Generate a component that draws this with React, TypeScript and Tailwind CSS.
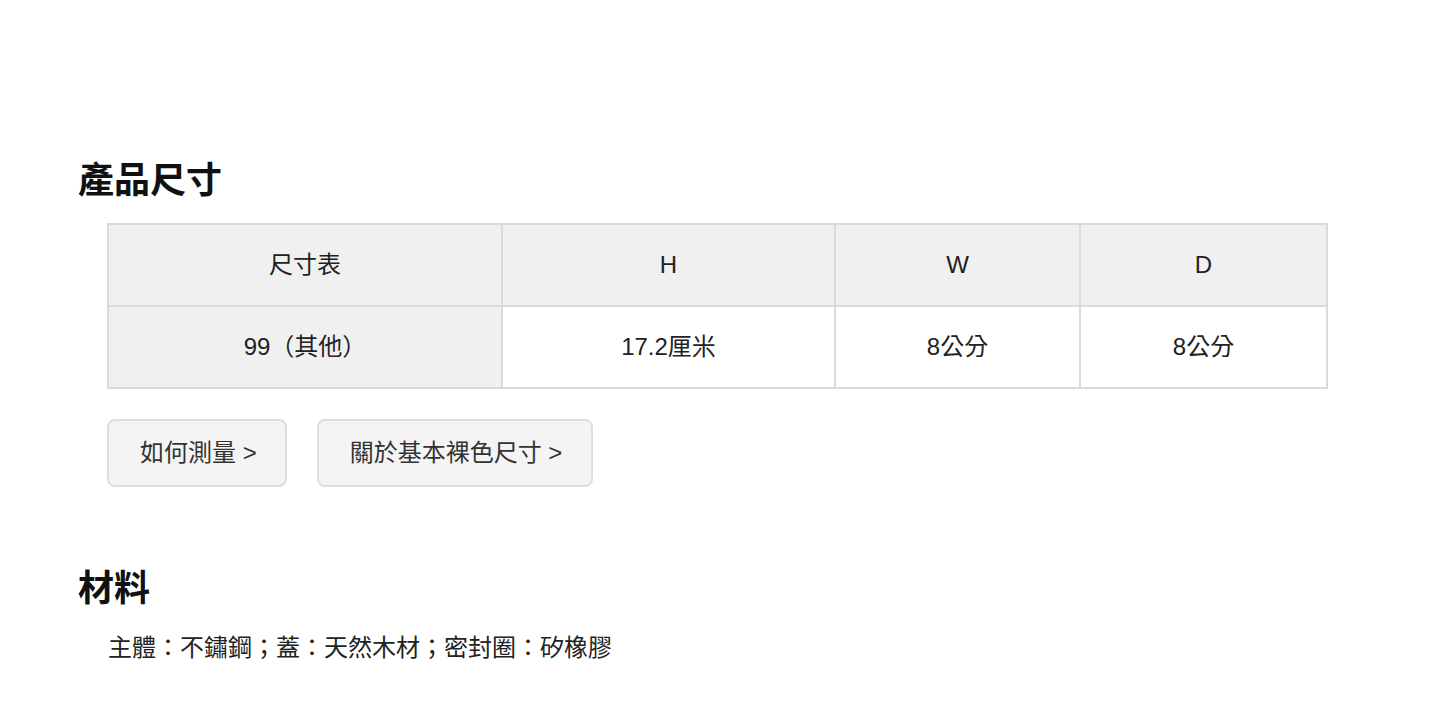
// 產品尺寸 + 材料 區塊

const FONT = '[font-family:"Liberation_Sans","Noto_Sans_CJK_TC",sans-serif]'

const COLS = [
  { label: '尺寸表', w: 'w-[394px]' },
  { label: 'H', w: 'w-[333px]' },
  { label: 'W', w: 'w-[245px]' },
  { label: 'D', w: 'w-[247px]' },
]

const ROW = ['99（其他）', '17.2厘米', '8公分', '8公分']

export default function App() {
  return (
    <div className={`${FONT} bg-white min-h-[714px] pl-[78px] pt-[158px] text-[#222]`}>
      <h2 className="text-[36px] font-bold leading-[46px] text-[#111]">產品尺寸</h2>

      <table className="ml-[29px] mt-[19px] w-[1219px] table-fixed border-collapse text-[24px]">
        <colgroup>
          {COLS.map(c => (
            <col key={c.label} className={c.w} />
          ))}
        </colgroup>
        <thead>
          <tr className="h-[82px] bg-[#f0f0f0]">
            {COLS.map(c => (
              <th key={c.label} className="border-2 border-[#dadada] font-normal text-center">
                {c.label}
              </th>
            ))}
          </tr>
        </thead>
        <tbody>
          <tr className="h-[82px]">
            {ROW.map((v, i) => (
              <td
                key={i}
                className={`border-2 border-[#dadada] text-center ${i === 0 ? 'bg-[#f0f0f0]' : 'bg-white'}`}
              >
                {v}
              </td>
            ))}
          </tr>
        </tbody>
      </table>

      <div className="ml-[29px] mt-[30px] flex gap-[30px]">
        <button className="h-[68px] pl-[31px] pr-[28px] rounded-[8px] border-2 border-[#dedede] bg-[#f4f4f4] text-[24px] text-[#333]">
          如何測量 &gt;
        </button>
        <button className="h-[68px] pl-[31px] pr-[29px] rounded-[8px] border-2 border-[#dedede] bg-[#f4f4f4] text-[24px] text-[#333]">
          關於基本裸色尺寸 &gt;
        </button>
      </div>

      <h2 className="mt-[79px] text-[36px] font-bold leading-[46px] text-[#111]">材料</h2>
      <p className="ml-[30px] mt-[19px] text-[24px] leading-[34px]">主體：不鏽鋼；蓋：天然木材；密封圈：矽橡膠</p>
    </div>
  )
}
